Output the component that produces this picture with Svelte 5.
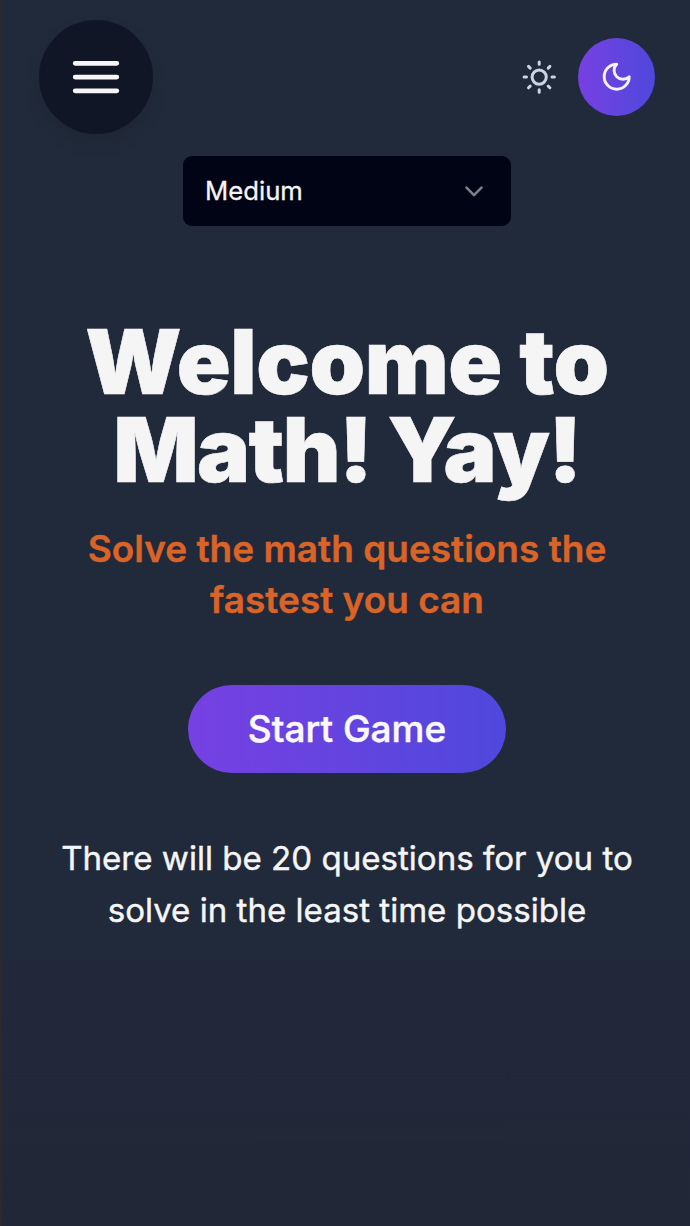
<script>
  let difficulty = $state('Medium');
</script>

<div class="page">
  <header>
    <button class="menu" aria-label="Menu">
      <svg width="48" height="36" viewBox="0 0 48 36" fill="none" stroke="#f7f5f6" stroke-width="4.8" stroke-linecap="round">
        <path d="M3.2 4.3H44.8M3.2 18.1H44.8M3.2 31.8H44.8" />
      </svg>
    </button>
    <div class="theme">
      <svg class="sun" width="34" height="34" viewBox="0 0 34 34" fill="none" stroke="#cbd5e1" stroke-width="3" stroke-linecap="round">
        <circle cx="17.2" cy="17.1" r="7.1" />
        <path d="M17.2 1.9V4.3M17.2 29.8V32.2M2.1 17.1H4.5M30 17.1H32.4M6.5 6.4L8.2 8.1M26.2 26.1L27.9 27.8M6.5 27.8L8.2 26.1M26.2 8.1L27.9 6.4" />
      </svg>
      <button class="dark" aria-label="Dark theme">
        <svg width="33.4" height="33.4" viewBox="0 0 24 24" fill="none" stroke="#f5f3ff" stroke-width="2.1" stroke-linecap="round" stroke-linejoin="round">
          <path d="M12 3a6 6 0 0 0 9 9 9 9 0 1 1-9-9Z" />
        </svg>
      </button>
    </div>
  </header>

  <button class="select">
    <span>{difficulty}</span>
    <svg width="18" height="11" viewBox="0 0 18 11" fill="none" stroke="#7f8087" stroke-width="2.6" stroke-linecap="round" stroke-linejoin="round">
      <path d="M1.5 1.7L9 9.2L16.5 1.7" />
    </svg>
  </button>

  <main>
    <h1>Welcome to<br /><span class="tight">Math! Yay!</span></h1>
    <h2>Solve the math questions the<br />fastest you can</h2>
    <button class="start"><span>Start Game</span></button>
    <p>There will be 20 questions for you to<br />solve in the least time possible</p>
  </main>
</div>

<style>
  :global(body) {
    margin: 0;
    background: #212939;
  }
  .page {
    box-sizing: border-box;
    width: 690px;
    height: 1226px;
    overflow: hidden;
    border-left: 2px solid #2a2a2d;
    background: linear-gradient(#212a3a 0, #212a3a 959px, #222739 960px, #222738 100%);
    font-family: Inter, sans-serif;
    color: #f5f5f5;
    display: flex;
    flex-direction: column;
    align-items: center;
  }
  button {
    border: 0;
    padding: 0;
    font-family: inherit;
    color: inherit;
    display: flex;
    align-items: center;
    justify-content: center;
  }
  header {
    box-sizing: border-box;
    width: 100%;
    padding: 20px 35px 0 37px;
    display: flex;
    align-items: center;
    justify-content: space-between;
  }
  .menu {
    width: 114px;
    height: 114px;
    border-radius: 50%;
    background: #111627;
    box-shadow: 0 9px 12px rgba(30, 38, 50, 0.6);
  }
  .theme {
    display: flex;
    align-items: center;
    gap: 22px;
  }
  .dark {
    width: 77px;
    height: 78px;
    border-radius: 50%;
    background: linear-gradient(90deg, #7740e2, #4f48dc);
  }
  .select {
    box-sizing: border-box;
    width: 328px;
    height: 70px;
    margin: 22px 0 0 2px;
    padding: 0 28px 0 22px;
    border-radius: 9px;
    background: #010414;
    font-size: 25.7px;
    -webkit-text-stroke: 0.3px currentColor;
    justify-content: space-between;
  }
  .select span {
    padding-bottom: 2px;
  }
  main {
    display: flex;
    flex-direction: column;
    align-items: center;
    text-align: center;
    padding: 92px 0 0 2px;
  }
  h1, h2, p {
    margin: 0;
    white-space: nowrap;
  }
  h1 {
    font-size: 89px;
    line-height: 88px;
    font-weight: 900;
    letter-spacing: -0.4px;
    -webkit-text-stroke: 0.6px currentColor;
  }
  .tight {
    letter-spacing: -1.6px;
  }
  h2 {
    margin-top: 29px;
    font-size: 37px;
    line-height: 51px;
    font-weight: 600;
    color: #da6328;
    -webkit-text-stroke: 0.4px currentColor;
  }
  .start {
    width: 318px;
    height: 88px;
    margin-top: 60px;
    border-radius: 44px;
    background: linear-gradient(90deg, #7740e2, #4f48dc);
    font-size: 37px;
    font-weight: 500;
    color: #faf8ff;
    -webkit-text-stroke: 0.5px currentColor;
  }
  .start span {
    padding-bottom: 2px;
  }
  p {
    margin-top: 59px;
    font-size: 33.1px;
    line-height: 52px;
    font-weight: 400;
    -webkit-text-stroke: 0.4px currentColor;
  }
</style>
